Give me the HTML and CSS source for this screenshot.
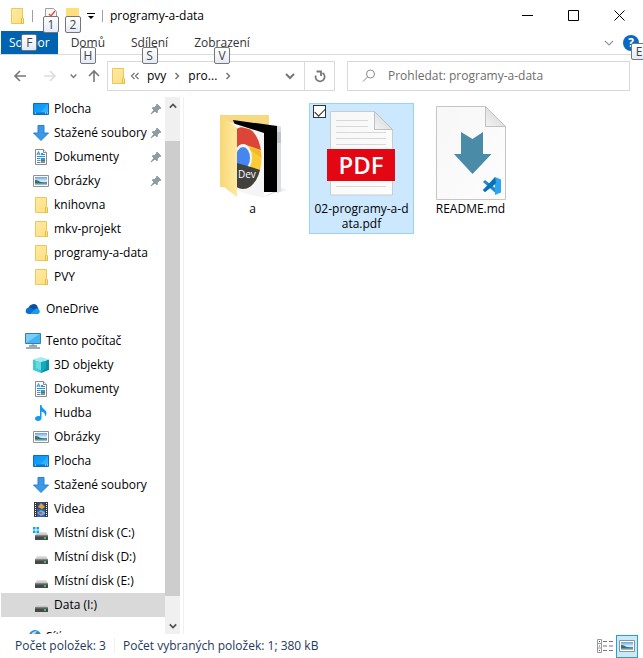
FILE: index.html
```html
<!DOCTYPE html>
<html lang="cs">
<head>
<meta charset="utf-8">
<title>programy-a-data</title>
<link rel="stylesheet" href="styles.css">
</head>
<body>
<svg class="sprite" aria-hidden="true">
  <defs>
    <linearGradient id="g-folder" x1="0" y1="0" x2="1" y2="1"><stop offset="0" stop-color="#ffeaa5"/><stop offset="1" stop-color="#fddf7e"/></linearGradient>
    <linearGradient id="g-screen" x1="0" y1="0" x2="1" y2="1"><stop offset="0" stop-color="#0a93f2"/><stop offset=".55" stop-color="#12a0ff"/><stop offset="1" stop-color="#35b0ff"/></linearGradient>
    <linearGradient id="g-sky" x1="0" y1="0" x2="0" y2="1"><stop offset="0" stop-color="#5fa4ea"/><stop offset=".5" stop-color="#d8edfb"/></linearGradient>
    <linearGradient id="g-drive" x1="0" y1="0" x2="0" y2="1"><stop offset="0" stop-color="#e6e6e6"/><stop offset="1" stop-color="#b9b9b9"/></linearGradient>
    <linearGradient id="g-flap" x1="0" y1="0" x2="1" y2="0"><stop offset="0" stop-color="#f8d775"/><stop offset="1" stop-color="#ffe9a2"/></linearGradient>
    <linearGradient id="g-page" x1="0" y1="0" x2="1" y2="1"><stop offset="0" stop-color="#f7f7f7"/><stop offset="1" stop-color="#fdfdfd"/></linearGradient>
    <linearGradient id="g-fold" x1="0" y1="1" x2="1" y2="0"><stop offset="0" stop-color="#f4f4f4"/><stop offset="1" stop-color="#cfcfcf"/></linearGradient>
    <linearGradient id="g-shadow" x1="0" y1="0" x2="1" y2="0"><stop offset="0" stop-color="#bbb"/><stop offset="1" stop-color="#fff"/></linearGradient>
    <clipPath id="c-page"><path d="M33 22 60 29V94L33 87z"/></clipPath>
    <clipPath id="c-logo"><ellipse cx="39" cy="54" rx="18.500" ry="31"/></clipPath>
  </defs>
  <symbol id="folder" viewBox="0 0 16 16"><path d="M2.500.5h11v10.500l1 .5v4H2.500z" fill="url(#g-folder)" stroke="#e9c95a"/><path d="M12.500 15.500V11l1-1.500 1 1.500v4.500z" fill="#ffe79a" stroke="#e3bd3f"/></symbol>
  <symbol id="desktop" viewBox="0 0 16 16"><path d="M.5 2.500h15v11H.5z" fill="url(#g-screen)" stroke="#0a6fc0"/><path d="M8 11 15 3v8z" fill="#4dbcff" opacity=".5"/><path d="M1 11.500h14v1.500H1z" fill="#0878cf"/><path d="M2 12h1M12 12h1M14 12h1" stroke="#fff"/></symbol>
  <symbol id="download" viewBox="0 0 16 16"><path d="M5 .5h6v7.500h4.500L8 15.500.5 8H5z" fill="#3c98e6" stroke="#2680cf"/></symbol>
  <symbol id="document" viewBox="0 0 16 16"><path d="M2.500.5h8l3 3v12h-11z" fill="#fff" stroke="#8b8b8b"/><path d="M10.500.5v3h3" fill="#eee" stroke="#8b8b8b"/><path d="M4 6 5.500 2.500 7 6M4.500 5h2M8 4.500h2M4 7.500h8M8 5.500h4M4 9.500h3.500M4 13.500h3.500" fill="none" stroke="#2491df"/><path d="M4 11.500h3.500M8 13.500h4" stroke="#888"/><path d="M8 9h4v3.500H8z" fill="#3e92bf"/><path d="M8 11h4v1.500H8z" fill="#477964"/></symbol>
  <symbol id="picture" viewBox="0 0 16 16"><path d="M.5 2.500h15v11H.5z" fill="#fff" stroke="#929292"/><path d="M2 4h12v8H2z" fill="url(#g-sky)"/><path d="M2 7c3 0 4 1.500 6 2 2 .3 4 .3 6 .3V11H2z" fill="#3d6a6b"/><path d="M2 10.500h12V12H2z" fill="#8fc0d4"/></symbol>
  <symbol id="cloud" viewBox="0 0 16 16"><path d="M3.500 7a5 4.500 0 0 1 8.500-2.500l1.500 3.500L8 12z" fill="#0a4fa3"/><path d="M3.500 13a3.200 3.200 0 1 1 1.500-6.200L12 10l-3 3z" fill="#0873cc"/><path d="M5 13 10.500 7.700A2.900 2.900 0 1 1 13 13z" fill="#1b9ce6"/></symbol>
  <symbol id="computer" viewBox="0 0 16 16"><path d="M.5.5h15v10H.5z" fill="#43b4f3" stroke="#367fa9"/><path d="M1 10 14.500 1H1z" fill="#79cdf8"/><path d="M6.500 11h3v2h-3z" fill="#adb9c4"/><path d="M4 13h8M1 15h14" stroke="#8190a1" stroke-width="1.500"/></symbol>
  <symbol id="cube" viewBox="0 0 16 16"><path d="M0 2.500 8 5v11l-8-3z" fill="#3fcbd5"/><path d="M16 2.500 8 5v11l8-3z" fill="#098ea8"/><path d="M0 2.500 8 0l8 2.500L8 5z" fill="#a4ebed"/><path d="M3 4 8 5l5-1v7l-5 2-5-2z" fill="#78dfe5" opacity=".7"/><path d="M8 5v11l5-5V4z" fill="#15a9bb"/></symbol>
  <symbol id="music" viewBox="0 0 16 16"><path d="M7 0h1.500c0 4 5 4.500 5 8 0 1.500-.5 2.500-1.500 3.500.5-3-1-4-3.500-5V13c0 2-1.500 3-3.500 3s-3-1-3-2.500S3.500 11 5.500 11c.7 0 1 .1 1.500.3z" fill="#119af1"/></symbol>
  <symbol id="video" viewBox="0 0 16 16"><path d="M1 1h14v15H1z" fill="#37383b"/><path d="M4 1h8v15H4z" fill="#2c61ad"/><path d="M4 1h8v7H4z" fill="#384d76"/><path d="M5 6 8 2l4 4-3 2z" fill="#e4a534"/><path d="M4 12 8 9l4 2v2l-4 2z" fill="#6daff0"/><path d="M6 11h3v2H6z" fill="#c65b46"/><path d="M2.500 2v14M13.500 2v14" stroke="#fff" stroke-width="1" stroke-dasharray="1 1"/></symbol>
  <symbol id="drive" viewBox="0 0 16 16"><path d="M4 7h9l2 3.500H2z" fill="url(#g-drive)"/><path d="M2 10.500h13V15H2z" fill="#45494b"/><path d="M2 10.500h13v1H2z" fill="#777"/><path d="M11 13h2" stroke="#3ced52" stroke-width="1.500"/></symbol>
  <symbol id="windows" viewBox="0 0 16 16"><path d="M0 2h2.500v2.500H0zM3.500 2H6v2.500H3.500zM0 5.500h2.500V8H0zM3.500 5.500H6V8H3.500z" fill="#00a9f4"/></symbol>
  <symbol id="globe" viewBox="0 0 16 16"><circle cx="10" cy="7" r="6" fill="#3588c4"/><path d="M6 6c1-3 3-4 6-4l-2 3-3 1zM11 6l4 1-1 4-3-1z" fill="#b4dcf3"/><path d="M3 8h7v6H3z" fill="#64b7e8"/></symbol>
  <symbol id="pin" viewBox="0 0 12 12"><path d="m7 1 4 4-1.500.5-2 2L7 10 5 8l-4 3 3-4-2-2 2.500-.5 2-2z" fill="#8d9ba5" stroke="#8d9ba5"/></symbol>
  <symbol id="down" viewBox="0 0 10 10"><path d="m1 3 4 4 4-4" fill="none" stroke="currentColor" stroke-width="2"/></symbol>
  <symbol id="right" viewBox="0 0 10 10"><path d="m3.500 2 3 3-3 3" fill="none" stroke="currentColor" stroke-width="1.500"/></symbol>
  <symbol id="arrow" viewBox="0 0 14 14"><path d="M13 7H2m5-5L2 7l5 5" fill="none" stroke="currentColor" stroke-width="1.600"/></symbol>
</svg>

<div class="window">
  <header class="titlebar">
    <svg class="icon"><use href="#folder"/></svg>
    <span class="rule"></span>
    <button class="quick" aria-label="Vlastnosti"><svg class="icon" viewBox="0 0 16 16"><path d="M2.500.5h8l3 3v12h-11z" fill="#fafafa" stroke="#a0a0a0"/><path d="m6 6 2 2 4-5" fill="none" stroke="#d45b3d" stroke-width="1.500"/></svg><kbd class="tip">1</kbd></button>
    <button class="quick" aria-label="Nová složka"><svg class="icon" viewBox="0 0 16 16"><path d="M1 0h13v14H1z" fill="#ffdf7b"/></svg><kbd class="tip">2</kbd></button>
    <button class="customize" aria-label="Přizpůsobit panel"><svg viewBox="0 0 8 6"><path d="M0 0h8v1H0zM1 3h6L4 6z"/></svg></button>
    <span class="rule"></span>
    <h1 class="title">programy-a-data</h1>
    <button class="caption" aria-label="Minimalizovat"><svg viewBox="0 0 11 11"><path d="M0 5.500h11"/></svg></button>
    <button class="caption" aria-label="Maximalizovat"><svg viewBox="0 0 11 11"><path d="M.5.5h10v10H.5z"/></svg></button>
    <button class="caption" aria-label="Zavřít"><svg viewBox="0 0 11 11"><path d="m.5.5 10 10m0-10-10 10"/></svg></button>
  </header>

  <nav class="tabs">
    <button class="tab file">Soubor<kbd class="tip">F</kbd></button>
    <button class="tab">Domů<kbd class="tip">H</kbd></button>
    <button class="tab">Sdílení<kbd class="tip">S</kbd></button>
    <button class="tab">Zobrazení<kbd class="tip">V</kbd></button>
    <button class="expand" aria-label="Rozbalit pás karet"><svg viewBox="0 0 10 10"><path d="m1 3 4 4 4-4" fill="none" stroke="currentColor" stroke-width="1.200"/></svg></button>
    <button class="help" aria-label="Nápověda"><span class="mark">?</span><kbd class="tip">E</kbd></button>
  </nav>

  <div class="navbar">
    <button class="back" aria-label="Zpět"><svg><use href="#arrow"/></svg></button>
    <button class="forward" aria-label="Vpřed"><svg><use href="#arrow"/></svg></button>
    <button class="recent" aria-label="Poslední umístění"><svg><use href="#down"/></svg></button>
    <button class="up" aria-label="Nahoru"><svg><use href="#arrow"/></svg></button>
    <div class="address">
      <svg class="icon"><use href="#folder"/></svg>
      <svg class="more" viewBox="0 0 10 10"><path d="M4.500 2 1.500 5l3 3M8.500 2l-3 3 3 3" fill="none" stroke="currentColor" stroke-width="1.300"/></svg>
      <a class="crumb" href="#">pvy</a><svg class="step"><use href="#right"/></svg>
      <a class="crumb" href="#">pro...</a><svg class="step"><use href="#right"/></svg>
      <button class="history" aria-label="Předchozí umístění"><svg><use href="#down"/></svg></button>
      <button class="refresh" aria-label="Aktualizovat"><svg viewBox="0 0 14 14"><path d="M2.800 6.500A4.500 4.500 0 1 0 9.500 4M3.500 2.500H8V7" fill="none" stroke="currentColor" stroke-width="1.800"/></svg></button>
    </div>
    <label class="search">
      <svg viewBox="0 0 14 14"><circle cx="8.500" cy="5" r="4"/><path d="M5.500 8 1 12.500"/></svg>
      <input type="search" aria-label="Prohledat" placeholder="Prohledat: programy-a-data">
    </label>
  </div>

  <div class="body">
    <aside class="tree">
      <ul>
        <li class="item"><svg class="icon"><use href="#desktop"/></svg>Plocha<svg class="pin"><use href="#pin"/></svg></li>
        <li class="item"><svg class="icon"><use href="#download"/></svg>Stažené soubory<svg class="pin"><use href="#pin"/></svg></li>
        <li class="item"><svg class="icon"><use href="#document"/></svg>Dokumenty<svg class="pin"><use href="#pin"/></svg></li>
        <li class="item"><svg class="icon"><use href="#picture"/></svg>Obrázky<svg class="pin"><use href="#pin"/></svg></li>
        <li class="item"><svg class="icon"><use href="#folder"/></svg>knihovna</li>
        <li class="item"><svg class="icon"><use href="#folder"/></svg>mkv-projekt</li>
        <li class="item"><svg class="icon"><use href="#folder"/></svg>programy-a-data</li>
        <li class="item"><svg class="icon"><use href="#folder"/></svg>PVY</li>
      </ul>
      <ul>
        <li class="item root"><svg class="icon"><use href="#cloud"/></svg>OneDrive</li>
      </ul>
      <ul>
        <li class="item root"><svg class="icon"><use href="#computer"/></svg>Tento počítač</li>
        <li class="item"><svg class="icon"><use href="#cube"/></svg>3D objekty</li>
        <li class="item"><svg class="icon"><use href="#document"/></svg>Dokumenty</li>
        <li class="item"><svg class="icon"><use href="#music"/></svg>Hudba</li>
        <li class="item"><svg class="icon"><use href="#picture"/></svg>Obrázky</li>
        <li class="item"><svg class="icon"><use href="#desktop"/></svg>Plocha</li>
        <li class="item"><svg class="icon"><use href="#download"/></svg>Stažené soubory</li>
        <li class="item"><svg class="icon"><use href="#video"/></svg>Videa</li>
        <li class="item"><svg class="icon"><use href="#drive"/><use href="#windows"/></svg>Místní disk (C:)</li>
        <li class="item"><svg class="icon"><use href="#drive"/></svg>Místní disk (D:)</li>
        <li class="item"><svg class="icon"><use href="#drive"/></svg>Místní disk (E:)</li>
        <li class="item selected"><svg class="icon"><use href="#drive"/></svg>Data (I:)</li>
      </ul>
      <ul>
        <li class="item root"><svg class="icon"><use href="#globe"/></svg>Síť</li>
      </ul>
    </aside>
    <div class="scrollbar">
      <button class="scroll-up" aria-label="Posunout nahoru"><svg><use href="#down"/></svg></button>
      <span class="before"></span><span class="thumb"></span><span class="after"></span>
      <button class="scroll-down" aria-label="Posunout dolů"><svg><use href="#down"/></svg></button>
    </div>

    <main class="files">
      <figure class="file-tile">
        <svg class="preview" viewBox="0 0 97 97">
          <path d="M60 93 70 89 85 86 77 84z" fill="url(#g-shadow)"/>
          <path d="M16 11h49v72H16z" fill="#f6d981"/>
          <path d="m69 21 8 1.500v65l-4 1.500z" fill="#dcdde0"/><path d="M73 28h4v11h-4z" fill="#c0c2c8"/>
          <path d="m29 16 44 6v66H58z" fill="#000"/>
          <path d="m22 17 38 12v65l-27-7z" fill="#f5f5f6"/>
          <g clip-path="url(#c-page)"><g clip-path="url(#c-logo)">
            <path d="M15 20h45v70H15z" fill="#fdcb35"/><path d="M15 20h45v27L39 40l-8 7H15z" fill="#dc4639"/>
            <path d="m44 44 15 3v8z" fill="#e5a51e" opacity=".5"/>
            <ellipse cx="39" cy="54" rx="9" ry="14" fill="#f3f5f6"/><ellipse cx="39" cy="54" rx="7" ry="11" fill="#4587ef"/>
            <path d="m30 58 30 9v24H30z" fill="#41413f"/>
          </g></g>
          <path d="M16 11 33 24v69L16 80z" fill="url(#g-flap)"/>
          <text class="dev" x="34" y="74">Dev</text>
        </svg>
        <figcaption>a</figcaption>
      </figure>
      <figure class="file-tile chosen">
        <input class="check" type="checkbox" checked aria-label="Vybrat 02-programy-a-data.pdf">
        <svg class="preview" viewBox="0 0 97 97">
          <path d="M17.500 7.500h44l18 18v65.500h-62z" fill="url(#g-page)" stroke="#c7ccd0"/>
          <path d="M61.500 7.500v18h18z" fill="url(#g-fold)" stroke="#bcc1c5"/>
          <path d="M23 16.500h32M23 22.500h32M23 28.500h50M23 34.500h50M23 40.500h50M23 82.500h50" stroke="#d6d8da"/>
          <path d="M14 45h68v32H14z" fill="#e30613"/>
          <text class="pdf" x="48" y="70">PDF</text>
        </svg>
        <figcaption>02-programy-a-d<wbr>ata.pdf</figcaption>
      </figure>
      <figure class="file-tile">
        <svg class="preview" viewBox="0 0 97 97">
          <path d="M14.500 2.500h49l20 20v73h-69z" fill="url(#g-page)" stroke="#c5c5c5"/>
          <path d="M63.500 2.500v20h20z" fill="url(#g-fold)" stroke="#c0c0c0"/>
          <path d="m39 28 11.500 7L61 28v22h8.500l-19 20L32 50h7z" fill="#4a8ba8"/>
          <path d="m61 78 2-2 11 8.500v5z" fill="#2489ca"/><path d="m61 86 2 2 11-8.500v-5z" fill="#1070b3"/>
          <path d="m73 73 6 2.500v13L73 91z" fill="#2aa5ee"/><path d="m61 86 12-13 1 6-11 9z" fill="#0871ba"/>
        </svg>
        <figcaption>README.md</figcaption>
      </figure>
    </main>
  </div>

  <footer class="status">
    <span class="count">Počet položek: 3</span>
    <span class="picked">Počet vybraných položek: 1; 380 kB</span>
    <button class="view" aria-label="Podrobnosti"><svg viewBox="0 0 16 14"><path d="M.5.5h4v13h-4zM.5 4.500h4M.5 9h4" fill="#fff" stroke="#999"/><path d="M6 2.500h4M12 2.500h4M6 7h4M12 7h4M6 11.500h4M12 11.500h4" stroke="#777"/><path d="M2 2h1v1H2z" fill="#555"/><path d="M2 6.500h1v1H2z" fill="#2672d8"/><path d="M2 11h1v1H2z" fill="#e22"/></svg></button>
    <button class="view active" aria-label="Velké ikony"><svg class="thumbs"><use href="#picture"/></svg></button>
  </footer>
</div>
</body>
</html>
```
FILE: styles.css
```css
* { box-sizing: border-box; }

body {
  margin: 0;
  background: #fff;
  color: #000;
  font: 12px/16px "Open Sans", "Noto Sans", sans-serif;
}

button, input {
  padding: 0;
  border: 0;
  background: none;
  color: inherit;
  font: inherit;
}

svg { display: block; flex: none; }
ul { margin: 0; padding: 0; list-style: none; }
.sprite { position: absolute; width: 0; height: 0; }
.icon { width: 16px; height: 16px; }

.window {
  display: flex;
  flex-direction: column;
  height: 100vh;
  overflow: hidden;
}

.tip {
  position: absolute;
  z-index: 2;
  width: 16px;
  height: 17px;
  border: 1px solid #767676;
  border-radius: 2px;
  background: linear-gradient(#fff, #e4ebf7);
  color: #444;
  font: 12px/15px "Open Sans", sans-serif;
  text-align: center;
}

/* Title bar */
.titlebar {
  display: flex;
  flex: none;
  align-items: center;
  height: 31px;
  padding: 0 1px 0 9px;
}
.rule { width: 1px; height: 12px; margin: 0 7px; background: #a0a0a0; }
.quick { position: relative; width: 16px; margin: 0 3px; }
.quick .tip { left: 0; top: 8px; }
.customize { margin-left: 3px; }
.customize svg { width: 8px; height: 6px; }
.title { flex: 1; margin: 0; font-size: 12px; font-weight: 400; }
.caption { display: grid; place-items: center; width: 46px; height: 31px; }
.caption svg { width: 11px; height: 11px; fill: none; stroke: #000; }

/* Ribbon tabs */
.tabs {
  display: flex;
  flex: none;
  height: 24px;
  padding-left: 1px;
  border-bottom: 1px solid #dadbdc;
}
.tab { position: relative; padding: 0 13px; color: #333; }
.tab .tip { left: calc(50% - 8px); top: 16px; }
.file { padding: 0 8px; background: #0063b1; color: #fff; }
.file .tip { top: 3px; }
.expand { margin-left: auto; color: #999; }
.expand svg { width: 10px; height: 10px; }
.help { position: relative; width: 16px; margin: 0 4px 0 9px; }
.mark {
  display: block;
  width: 16px;
  height: 16px;
  border-radius: 50%;
  background: #0869c4;
  color: #fff;
  font-weight: 700;
}
.help .tip { left: 8px; top: 12px; }

/* Navigation bar */
.navbar {
  display: flex;
  flex: none;
  align-items: center;
  height: 42px;
  padding: 0 13px;
  color: #777;
}
.navbar > button svg { width: 14px; height: 14px; }
.forward { margin: 0 13px 0 16px; color: #ddd; }
.forward svg { transform: rotate(180deg); }
.navbar > .recent svg { width: 7px; height: 8px; }
.up { margin: 0 6px 0 10px; }
.up svg { transform: rotate(90deg); }
.address {
  display: flex;
  flex: 224;
  align-items: center;
  min-width: 0;
  height: 30px;
  padding-left: 2px;
  border: 1px solid #d9d9d9;
}
.more, .step { width: 10px; height: 10px; }
.more { margin: 0 7px 0 4px; }
.crumb { color: #000; text-decoration: none; }
.step { margin: 0 6px; }
.history { margin-left: auto; padding: 0 9px; }
.history svg { width: 10px; height: 10px; }
.refresh { display: grid; place-items: center; width: 30px; height: 28px; border-left: 1px solid #d9d9d9; }
.refresh svg { width: 14px; height: 14px; }
.search {
  display: flex;
  flex: 267;
  align-items: center;
  min-width: 0;
  height: 30px;
  margin-left: 12px;
  padding-left: 14px;
  border: 1px solid #d9d9d9;
}
.search svg { width: 14px; height: 14px; margin-right: 12px; fill: none; stroke: #888; }
.search input { flex: 1; min-width: 0; outline: 0; }
.search input::placeholder { color: #6d6d6d; opacity: 1; }

/* Tree and scroll bar */
.body { display: flex; flex: 1; min-height: 0; }
.tree { width: 165px; padding-left: 1px; overflow: hidden; }
.tree ul + ul { margin-top: 8px; }
.item {
  display: flex;
  align-items: center;
  height: 24px;
  padding: 0 3px 0 32px;
  white-space: nowrap;
}
.item .icon { margin-right: 5px; }
.root { padding-left: 24px; }
.selected { background: #d9d9d9; }
.pin { width: 12px; height: 12px; margin-left: auto; }
.scrollbar { display: flex; flex-direction: column; width: 15px; background: #f0f0f0; color: #505050; }
.scrollbar button { display: grid; place-items: center; height: 17px; }
.scrollbar svg { width: 8px; height: 8px; }
.scroll-up svg { transform: rotate(180deg); }
.before { flex: 27; }
.thumb { flex: 455; background: #cdcdcd; }
.after { flex: 21; }

/* Files */
.files {
  display: flex;
  flex: 1;
  flex-wrap: wrap;
  align-content: flex-start;
  align-items: flex-start;
  gap: 4px;
  margin-left: 3px;
  padding: 6px 16px;
  border-left: 1px solid #f0f0f0;
}
.file-tile {
  position: relative;
  width: 105px;
  margin: 0;
  padding-bottom: 2px;
  border: 1px solid transparent;
  line-height: 15px;
  text-align: center;
}
.chosen { border-color: #99d1ff; background: #cce8ff; }
.preview { width: 97px; height: 97px; margin: 0 auto; }
.dev { fill: #fff; font-size: 10px; }
.pdf { fill: #fff; font-size: 24px; font-weight: 600; text-anchor: middle; }
.check {
  position: absolute;
  left: 3px;
  top: 1px;
  width: 13px;
  height: 13px;
  margin: 0;
  border: 1px solid #333;
  background: #fff;
  appearance: none;
}
.check:checked::after {
  content: "";
  display: block;
  width: 9px;
  height: 5px;
  margin: 2px 1px;
  border: solid #222;
  border-width: 0 0 1px 1px;
  transform: rotate(-45deg);
}

/* Status bar */
.status {
  display: flex;
  flex: none;
  align-items: center;
  height: 24px;
  padding: 0 5px 0 15px;
  color: #1e395b;
}
.count { padding-right: 8px; border-right: 1px solid #f0f0f0; }
.picked { flex: 1; padding-left: 8px; }
.view { display: grid; place-items: center; width: 22px; height: 23px; }
.view svg { width: 16px; height: 14px; }
.view .thumbs { height: 16px; }
.active { border: 1px solid #26a0da; background: #cbe8f6; }
```
